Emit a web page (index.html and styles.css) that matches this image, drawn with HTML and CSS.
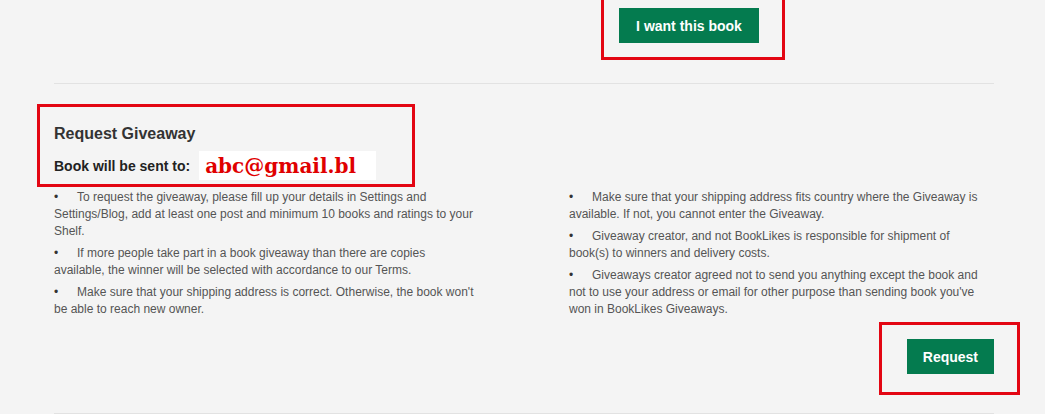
FILE: index.html
```html
<!DOCTYPE html>
<html lang="en">
<head>
    <meta charset="UTF-8">
    <title>Request Giveaway</title>
    <link rel="stylesheet" href="styles.css">
</head>
<body>
    <div class="page">

        <!-- Top action -->
        <div class="top-row">
            <div></div>
            <div>
                <button class="btn want-btn">I want this book</button>
            </div>
        </div>

        <hr class="divider">

        <!-- Request Giveaway -->
        <section class="giveaway">
            <h3>Request Giveaway</h3>
            <div class="send-to">
                <span class="send-label">Book will be sent to:</span>
                <span class="email">abc@gmail.bl</span>
            </div>

            <div class="rules">
                <ul>
                    <li>To request the giveaway, please fill up your details in Settings and Settings/Blog, add at least one post and minimum 10 books and ratings to your Shelf.</li>
                    <li>If more people take part in a book giveaway than there are copies available, the winner will be selected with accordance to our Terms.</li>
                    <li>Make sure that your shipping address is correct. Otherwise, the book won't be able to reach new owner.</li>
                </ul>
                <ul>
                    <li>Make sure that your shipping address fits country where the Giveaway is available. If not, you cannot enter the Giveaway.</li>
                    <li>Giveaway creator, and not BookLikes is responsible for shipment of book(s) to winners and delivery costs.</li>
                    <li>Giveaways creator agreed not to send you anything except the book and not to use your address or email for other purpose than sending book you've won in BookLikes Giveaways.</li>
                </ul>
            </div>

            <div class="actions">
                <button class="btn">Request</button>
            </div>
        </section>

        <hr class="divider bottom">

        <!-- Red annotation boxes -->
        <div class="mark mark-want"></div>
        <div class="mark mark-title"></div>
        <div class="mark mark-request"></div>
    </div>
</body>
</html>
```

FILE: styles.css
```css
/* Giveaway page */
body {
    margin: 0;
    padding: 0;
    background-color: #f4f4f4;
    font-family: 'Liberation Sans', Arial, sans-serif;
    color: #555555;
    overflow: hidden;
}

.page {
    position: relative;
    width: 940px;
    padding: 0 51px 0 54px;
}

/* Buttons */
.btn {
    height: 35px;
    padding: 0 16px;
    background-color: #047b4f;
    color: #ffffff;
    font-family: 'Liberation Sans', Arial, sans-serif;
    font-size: 14px;
    font-weight: bold;
    border: none;
    border-radius: 0;
    cursor: pointer;
}

.top-row {
    display: grid;
    grid-template-columns: 425px 416px;
    column-gap: 90px;
    padding-top: 8px;
}

.want-btn {
    margin-left: 50px;
    width: 140px;
    display: block;
}

.divider {
    margin: 40px 0 0;
    border: none;
    border-top: 1px solid #e2e2e2;
    height: 0;
}

.divider.bottom {
    margin-top: 39px;
}

/* Section */
.giveaway {
    padding-top: 41px;
}

.giveaway h3 {
    margin: 0;
    font-size: 16px;
    line-height: 18px;
    color: #333333;
}

.send-to {
    display: flex;
    align-items: center;
    margin-top: 8px;
    height: 29px;
}

.send-label {
    font-size: 14px;
    font-weight: bold;
    color: #222222;
}

.email {
    margin-left: 9px;
    width: 171px;
    padding-left: 6px;
    height: 29px;
    line-height: 30px;
    background-color: #ffffff;
    font-family: 'DejaVu Serif', 'Liberation Serif', serif;
    font-size: 20px;
    font-weight: bold;
    color: #e00000;
}

/* Rules */
.rules {
    display: grid;
    grid-template-columns: 425px 416px;
    column-gap: 90px;
    margin-top: 9px;
}

.rules ul {
    margin: 0;
    padding: 0;
    list-style: none;
}

.rules li {
    font-size: 12px;
    line-height: 17px;
    margin-bottom: 5px;
}

.rules li::before {
    content: "\2022";
    display: inline-block;
    width: 23px;
    color: #333333;
}

.actions {
    display: flex;
    justify-content: flex-end;
    margin-top: 16px;
}

/* Red annotation boxes */
.mark {
    position: absolute;
    box-sizing: border-box;
    border: 3px solid #e30613;
}

.mark-want {
    left: 601px;
    top: -10px;
    width: 184px;
    height: 70px;
}

.mark-title {
    left: 37px;
    top: 104px;
    width: 378px;
    height: 83px;
}

.mark-request {
    left: 879px;
    top: 322px;
    width: 141px;
    height: 73px;
}
```
